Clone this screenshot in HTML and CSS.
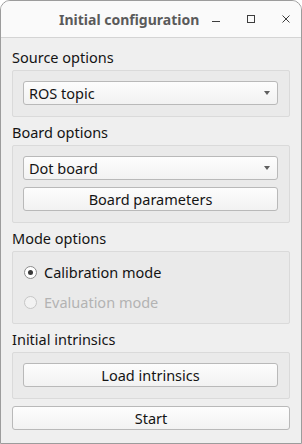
FILE: index.html
```html
<!DOCTYPE html>
<html lang="en">

<head>
    <meta charset="UTF-8">
    <meta name="viewport" content="width=device-width, initial-scale=1.0">
    <title>Initial configuration</title>

    <link rel="stylesheet" href="styles.css">
</head>

<body>
    <div class="window">
        <div class="titlebar">
            <span class="title">Initial configuration</span>
            <div class="controls">
                <svg class="ctl" width="12" height="12" viewBox="0 0 12 12">
                    <path d="M2 8.5h8" stroke="#3d3d3d" stroke-width="1" />
                </svg>
                <svg class="ctl" width="12" height="12" viewBox="0 0 12 12">
                    <rect x="2.5" y="2.5" width="7" height="7" fill="none" stroke="#3d3d3d" stroke-width="1" />
                </svg>
                <svg class="ctl" width="12" height="12" viewBox="0 0 12 12">
                    <path d="M2.5 2.5l7 7M9.5 2.5l-7 7" stroke="#3d3d3d" stroke-width="1" />
                </svg>
            </div>
        </div>

        <div class="content">
            <div class="label">Source options</div>
            <div class="group">
                <div class="combo">ROS topic<span class="arrow"></span></div>
            </div>

            <div class="label">Board options</div>
            <div class="group">
                <div class="combo">Dot board<span class="arrow"></span></div>
                <button class="btn">Board parameters</button>
            </div>

            <div class="label">Mode options</div>
            <div class="group radios">
                <div class="radio checked"><span class="circle"></span>Calibration mode</div>
                <div class="radio disabled"><span class="circle"></span>Evaluation mode</div>
            </div>

            <div class="label">Initial intrinsics</div>
            <div class="group">
                <button class="btn">Load intrinsics</button>
            </div>

            <button class="btn start">Start</button>
        </div>
    </div>
</body>

</html>
```

FILE: styles.css
```css
* {
    margin: 0;
    padding: 0;
    box-sizing: border-box;
}

body {
    background: #ffffff;
    font-family: "Noto Sans", "DejaVu Sans", sans-serif;
    font-size: 14.5px;
    color: #141414;
}

.window {
    width: 302px;
    height: 444px;
    border: 1px solid #9c9c9c;
    border-radius: 10px 10px 0 0;
    background: #efefef;
    overflow: hidden;
}

.titlebar {
    height: 37px;
    background: #fafafa;
    border-bottom: 1px solid #d4d4d4;
    display: flex;
    align-items: center;
}

.title {
    font-weight: bold;
    color: #5a5a5a;
    font-size: 14px;
    margin-left: 58px;
}

.controls {
    display: flex;
    gap: 23px;
    margin-left: 11px;
}

.content {
    padding: 9px 11px 0 11px;
}

.label {
    height: 20px;
    line-height: 20px;
    margin-bottom: 3px;
}

.group {
    border: 1px solid #dadada;
    background: #eaeaea;
    border-radius: 2px;
    padding: 10px 11px 11px 10px;
    margin-bottom: 5px;
    display: flex;
    flex-direction: column;
    gap: 7px;
}

.combo,
.btn {
    height: 24px;
    border: 1px solid #b9b9b9;
    border-radius: 3px;
    background: linear-gradient(#fdfdfd, #f2f2f2);
    font-family: inherit;
    font-size: 14.5px;
    color: #141414;
}

.combo {
    display: flex;
    align-items: center;
    justify-content: space-between;
    padding: 0 7px 0 5px;
}

.arrow {
    width: 0;
    height: 0;
    border-left: 3.5px solid transparent;
    border-right: 3.5px solid transparent;
    border-top: 4px solid #5f5f5f;
}

.btn {
    width: 100%;
    text-align: center;
}

.radios {
    padding: 11px 10px 12px 10px;
    gap: 12px;
}

.radio {
    display: flex;
    align-items: center;
    height: 18px;
    gap: 7px;
    padding-left: 1px;
}

.circle {
    width: 13px;
    height: 13px;
    border: 1px solid #8c8c8c;
    border-radius: 50%;
    background: #ffffff;
    display: flex;
    align-items: center;
    justify-content: center;
}

.checked .circle::after {
    content: "";
    width: 5px;
    height: 5px;
    border-radius: 50%;
    background: #3a3a3a;
}

.disabled {
    color: #b3b3b3;
}

.disabled .circle {
    border-color: #c6c6c6;
    background: #f2f2f2;
}

.start {
    margin-top: 2px;
}
```
